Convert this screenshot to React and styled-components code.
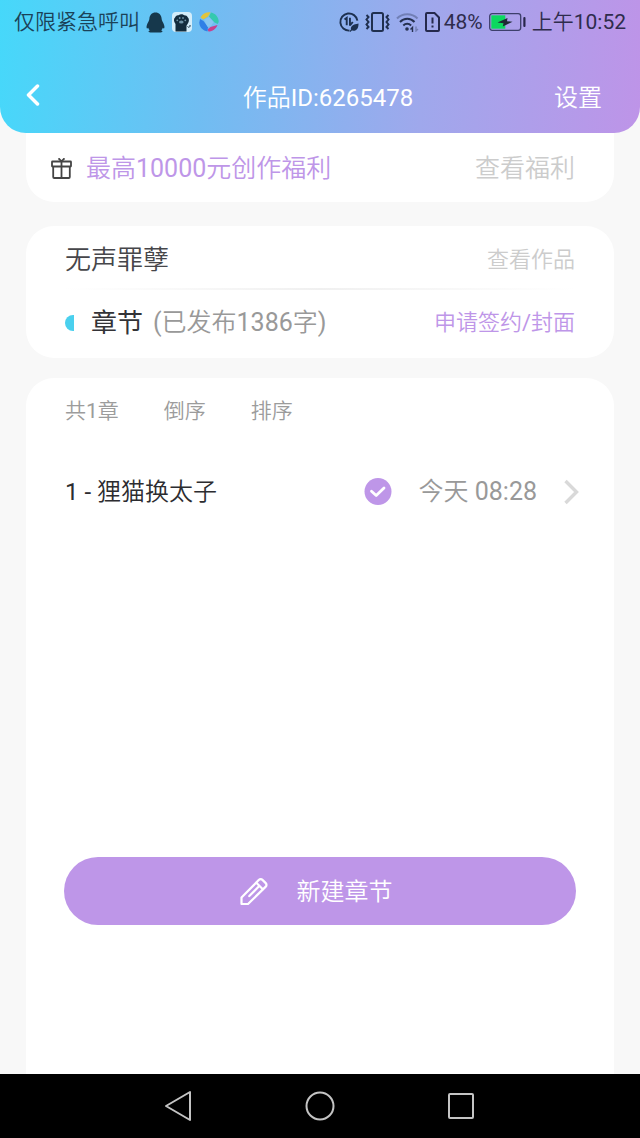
import { useState } from 'react';
import styled, { createGlobalStyle } from 'styled-components';

const GlobalStyle = createGlobalStyle`
  * {
    box-sizing: border-box;
  }
  body {
    margin: 0;
    background: #f8f8f8;
    font-family: Roboto, 'Noto Sans CJK SC DemiLight', 'Noto Sans CJK SC', sans-serif;
    font-weight: 400;
  }
  button {
    padding: 0;
    border: 0;
    background: none;
    font: inherit;
    color: inherit;
    cursor: pointer;
  }
  svg {
    display: block;
    flex: none;
  }
`;

const Screen = styled.div`
  min-height: 100vh;
  display: flex;
  flex-direction: column;
`;

const Header = styled.header`
  height: 133px;
  border-radius: 0 0 26px 26px;
  background: linear-gradient(94deg, #46d8fa 0%, #70bdf2 32%, #9fa8ec 66%, #be94e8 100%);
`;

const StatusBar = styled.div`
  height: 44px;
  padding: 0 14px;
  display: flex;
  align-items: center;
  justify-content: space-between;
  font-size: 21px;
  line-height: 28px;
  color: #1f3a52;
`;

const StatusGroup = styled.div`
  display: flex;
  align-items: center;
  gap: ${props => props.$gap};
  color: ${props => props.$color};
  white-space: nowrap;
`;

const TitleBar = styled.div`
  height: 89px;
  padding: 32px 38px 14px 26px;
  display: grid;
  grid-template-columns: 1fr auto 1fr;
  align-items: center;
  color: #fff;
  font-size: 24px;
  line-height: 32px;
`;

const Title = styled.h1`
  margin: 0 0 0 28px;
  font: inherit;
`;

const BackButton = styled.button`
  justify-self: start;
  padding-bottom: 6px;
`;

const SettingsButton = styled.button`
  justify-self: end;
`;

const Content = styled.main`
  flex: 1;
  display: flex;
  flex-direction: column;
  padding: 0 26px;
`;

const Card = styled.section`
  background: #fff;
  border-radius: 28px;
  padding: 0 39px;
`;

const BenefitCard = styled(Card)`
  height: 69px;
  margin-bottom: 24px;
  padding: 2px 39px 0 25px;
  border-radius: 0 0 28px 28px;
  display: flex;
  align-items: center;
  gap: 14px;
`;

const WorkCard = styled(Card)`
  margin-bottom: 20px;
  padding: 6px 39px 2px;
`;

const ChapterCard = styled(Card)`
  flex: 1;
  display: flex;
  flex-direction: column;
  border-radius: 28px 28px 0 0;
  padding-bottom: 149px;
`;

const Row = styled.div`
  display: flex;
  align-items: center;
  height: ${props => props.$height};
`;

const Divider = styled.hr`
  height: 2px;
  margin: 0;
  border: 0;
  background: linear-gradient(90deg, #fff, #f0f0f0 50%, #fff);
`;

const Text = styled.span`
  font-size: ${props => props.$size};
  line-height: 36px;
  color: ${props => props.$color};
  white-space: nowrap;
`;

const Link = styled.a`
  margin-left: auto;
  font-size: ${props => props.$size};
  line-height: 36px;
  color: ${props => props.$color};
  text-decoration: none;
  white-space: nowrap;
`;

const WorkTitle = styled.h2`
  margin: 0;
  font-size: 26px;
  font-weight: inherit;
  line-height: 36px;
  color: #46464a;
`;

const SectionTitle = styled(WorkTitle)`
  margin: 0 10px 0 17px;
  font-family: Roboto, 'Noto Sans CJK SC', sans-serif;
  color: #333337;
`;

const HalfDot = styled.span`
  width: 9px;
  height: 16px;
  border-radius: 9px 0 0 9px;
  background: #4ad0ee;
`;

const ListTools = styled(Row)`
  gap: 45px;
  font-size: 21px;
  line-height: 32px;
  color: #9c9c9c;
`;

const ChapterList = styled.ul`
  flex: 1;
  margin: 0;
  padding: 14px 0 0;
  list-style: none;
`;

const ChapterRow = styled.button`
  width: 100%;
  height: 68px;
  display: flex;
  align-items: center;
  text-align: left;
`;

const ChapterName = styled.span`
  flex: 1;
  font-size: 24px;
  line-height: 36px;
  color: #2c2c30;
`;

const ChapterMeta = styled.span`
  display: flex;
  align-items: center;
  gap: 27px;
  margin-right: -4px;
`;

const NewChapterButton = styled.button`
  height: 68px;
  margin: 0 -1px;
  padding: 2px 8px 0 0;
  border-radius: 34px;
  background: #be96e8;
  color: #fff;
  font-size: 24px;
  line-height: 36px;
  display: flex;
  align-items: center;
  justify-content: center;
  gap: 29px;
`;

const NavBar = styled.nav`
  height: 64px;
  background: #000;
  display: flex;
  justify-content: center;
`;

const NavButton = styled.button`
  flex: 0 0 22%;
  display: flex;
  align-items: center;
  justify-content: center;
`;

const QQIcon = () => (
  <svg width="19" height="21" viewBox="0 0 19 21" fill="#16384c">
    <path d="M9.500 .5C5.800 .5 3.600 3.200 3.400 6.600c0 1-.3 2-1 3.200C1.200 12 .3 14 .6 15.800c.2 1.100 1 .8 1.600 0 .3 1 .9 1.900 1.600 2.600-.9.300-1.400.6-1.200 1.300.2.500 1.200.7 3 .7h7.800c1.800 0 2.800-.2 3-.7.2-.7-.3-1-1.200-1.300.7-.7 1.300-1.600 1.600-2.600.6.800 1.400 1.100 1.600 0 .300-1.800-.6-3.800-1.800-6-.7-1.200-1-2.200-1-3.200C15.400 3.200 13.200.5 9.500.5z" />
  </svg>
);

const PawIcon = () => (
  <svg width="20" height="20" viewBox="0 0 20 20">
    <rect width="20" height="20" rx="4" fill="#d3edfa" />
    <path d="M3.500 19.500V12C1.500 9.500 1.500 6.500 3.200 5.200 4 3.200 6 3.400 6.600 3.300 8 1.800 11 1.800 12.200 3.300c2 0 3 .7 3.500 2 1.700 1.500 1.600 4.500 0 6.500l-1.200 2v5.700z" fill="#132c3d" />
    <path d="M15.500 14.500c1.200 1.500 3 .6 2.500-1.500" fill="none" stroke="#132c3d" />
    <g fill="#6f94a8">
      <ellipse cx="9.300" cy="10" rx="2.300" ry="1.500" />
      <circle cx="5.300" cy="8.300" r=".9" />
      <circle cx="7.700" cy="6" r=".9" />
      <circle cx="11" cy="6" r=".9" />
      <circle cx="13.300" cy="8.300" r=".9" />
    </g>
  </svg>
);

const SwirlIcon = () => (
  <svg width="20" height="20" viewBox="0 0 20 20">
    <path d="M1.500 5.500C3.500 1.500 7.500 0 11.500 .4L9 4.500 4.500 7.500z" fill="#e2c43c" />
    <path d="M12 .4c4.500.8 7.700 4.800 7.700 9.600l-1 2L15.500 10.500 10 4.500z" fill="#35c9ae" />
    <path d="M18.500 13c-1.500 4-5 6.500-9 6.500L8.500 17.500l3-2.500z" fill="#c9408d" />
    <path d="M8.500 19.400C4 18.800.3 15 .3 10.500L1 7 4.500 9 9 15z" fill="#2f7fe6" />
    <path d="M5 7.800L9.800 5l4.700 5-2.500 4.300-3.500.5z" fill="#86c6f2" />
  </svg>
);

const DataSaverIcon = () => (
  <svg width="20" height="20" viewBox="0 0 21 21" fill="none" stroke="#1d3150" strokeWidth="2">
    <path d="M19.300 9A9 9 0 1 0 11 19.500" />
    <path d="M5.800 8l2.300-1.800V14M11.500 6v8.500M11.500 14l3-3.500" />
    <path d="M12.500 18.500c-.5-4 2.500-5.500 8-6.500 0 5-2 8.500-7 7.500z" fill="#1d3150" stroke="none" />
    <path d="M11.500 20.500l3-3" strokeWidth="1.200" />
  </svg>
);

const VibrateIcon = () => (
  <svg width="25" height="20" viewBox="0 0 25 20" fill="none" stroke="#20304f" strokeWidth="2">
    <rect x="7" y="1" width="11" height="18" rx="1.500" />
    <path d="M1.500 3l2 2-2 2.500 2 2.500-2 2.500 2 2.500-2 2M23.500 3l-2 2 2 2.500-2 2.500 2 2.500-2 2.500 2 2" />
  </svg>
);

const WifiIcon = () => (
  <svg width="23" height="20" viewBox="0 0 23 20" fill="none" stroke="#25304f" strokeWidth="2">
    <path d="M1 6.500C6.500.800 16 .8 21.500 6.500" opacity=".35" />
    <path d="M4 10c4-4.300 10.500-4.300 14.500 0M7.300 13.500c2.300-2.300 5.500-2.300 7.800 0" />
    <circle cx="11" cy="17" r="1.800" fill="#25304f" stroke="none" />
    <path d="M14.500 17.500l2-2V20" strokeWidth="1.400" />
    <path d="M20 14.500V19l2-2" strokeWidth="1.400" opacity=".35" />
  </svg>
);

const SimIcon = () => (
  <svg width="15" height="20" viewBox="0 0 15 20" fill="none" stroke="#25294c" strokeWidth="2">
    <path d="M2 1h7.500L14 5.500V18a1 1 0 0 1-1 1H2a1 1 0 0 1-1-1V2a1 1 0 0 1 1-1z" />
    <path d="M7.500 5.500v6M7.500 13.500v2" />
  </svg>
);

const BatteryIcon = () => (
  <svg width="37" height="18" viewBox="0 0 37 18">
    <rect x=".7" y=".7" width="31" height="16.600" rx="2.500" fill="none" stroke="#3d3f6b" strokeWidth="1.300" />
    <rect x="2.300" y="2.300" width="14" height="13.400" fill="#0bd95f" />
    <path d="M8.500 9.500L18.500 5l-.5 3.200 5.500.6-9.700 4.700.7-3.300z" fill="#1e2a34" />
    <rect x="34.300" y="4" width="2.200" height="10" rx="1" fill="#28264a" />
  </svg>
);

const BackIcon = () => (
  <svg width="14" height="22" viewBox="0 0 14 22" fill="none" stroke="#fff" strokeWidth="3.500" strokeLinecap="round" strokeLinejoin="round">
    <path d="M11.500 2L2.500 11l9 9" />
  </svg>
);

const GiftIcon = () => (
  <svg width="21" height="22" viewBox="0 0 21 22" fill="none" stroke="#444" strokeWidth="1.800">
    <rect x="1" y="3.500" width="19" height="5" rx=".5" />
    <path d="M2.200 8.500V19a1 1 0 0 0 1 1h14.600a1 1 0 0 0 1-1V8.500M10.500 3.500V20M7.500 .3l3 3L13.500 .3" />
  </svg>
);

const CheckIcon = () => (
  <svg width="28" height="28" viewBox="0 0 28 28">
    <circle cx="14" cy="13.500" r="13.500" fill="#be96e8" />
    <path d="M7.500 13.300l4.700 4.200 7.800-7.500" fill="none" stroke="#fff" strokeWidth="2.800" strokeLinecap="round" strokeLinejoin="round" />
  </svg>
);

const ArrowIcon = () => (
  <svg width="15" height="26" viewBox="0 0 15 26" fill="none" stroke="#d9d9d9" strokeWidth="3.400">
    <path d="M1.500 2L12.500 13 1.500 24" />
  </svg>
);

const PencilIcon = () => (
  <svg width="28" height="28" viewBox="0 0 28 28" fill="none" stroke="#fff" strokeWidth="2.200" strokeLinejoin="round" strokeLinecap="round">
    <path d="M1.500 26v-6.500L18.700 2.100q2-2 4 0l2.800 2.800q2 2 0 4L8 26z" />
    <path d="M16.300 4.700l6.500 6.500M18.500 8.800L9.300 18.100" />
  </svg>
);

function StatusInfo() {
  return (
    <StatusBar>
      <StatusGroup $gap="7px" $color="#1b4258">
        <StatusGroup $gap="6px">
          仅限紧急呼叫
          <QQIcon />
        </StatusGroup>
        <PawIcon />
        <SwirlIcon />
      </StatusGroup>
      <StatusGroup $gap="6px" $color="#2e2c4c">
        <DataSaverIcon />
        <VibrateIcon />
        <WifiIcon />
        <StatusGroup $gap="4px">
          <SimIcon />
          48%
        </StatusGroup>
        <BatteryIcon />
        上午10:52
      </StatusGroup>
    </StatusBar>
  );
}

const chapters = [{ id: 1, name: '狸猫换太子', time: '今天 08:28' }];

function App() {
  const [reversed, setReversed] = useState(false);
  const list = reversed ? [...chapters].reverse() : chapters;

  return (
    <Screen>
      <GlobalStyle />
      <Header>
        <StatusInfo />
        <TitleBar>
          <BackButton aria-label="返回">
            <BackIcon />
          </BackButton>
          <Title>作品ID:6265478</Title>
          <SettingsButton>设置</SettingsButton>
        </TitleBar>
      </Header>

      <Content>
        <BenefitCard>
          <GiftIcon />
          <Text $size="25px" $color="#be96e8">最高10000元创作福利</Text>
          <Link href="#benefits" $size="25px" $color="#cccccc">查看福利</Link>
        </BenefitCard>

        <WorkCard>
          <Row $height="56px">
            <WorkTitle>无声罪孽</WorkTitle>
            <Link href="#work" $size="22px" $color="#cccccc">查看作品</Link>
          </Row>
          <Divider />
          <Row $height="66px">
            <HalfDot />
            <SectionTitle>章节</SectionTitle>
            <Text $size="25px" $color="#999999">(已发布1386字)</Text>
            <Link href="#sign" $size="22px" $color="#be96e8">申请签约/封面</Link>
          </Row>
        </WorkCard>

        <ChapterCard>
          <ListTools $height="66px">
            <span>共{chapters.length}章</span>
            <button onClick={() => setReversed(!reversed)}>倒序</button>
            <button>排序</button>
          </ListTools>
          <ChapterList>
            {list.map(chapter => (
              <li key={chapter.id}>
                <ChapterRow>
                  <ChapterName>{chapter.id} - {chapter.name}</ChapterName>
                  <ChapterMeta>
                    <CheckIcon />
                    <Text $size="25px" $color="#999999">{chapter.time}</Text>
                    <ArrowIcon />
                  </ChapterMeta>
                </ChapterRow>
              </li>
            ))}
          </ChapterList>
          <NewChapterButton>
            <PencilIcon />
            新建章节
          </NewChapterButton>
        </ChapterCard>
      </Content>

      <NavBar>
        <NavButton aria-label="后退">
          <svg width="30" height="32" viewBox="0 0 30 32" fill="none" stroke="#c4c4c4" strokeWidth="2" strokeLinejoin="round">
            <path d="M26 2v28L2 16z" />
          </svg>
        </NavButton>
        <NavButton aria-label="主屏幕">
          <svg width="32" height="32" viewBox="0 0 32 32" fill="none" stroke="#c4c4c4" strokeWidth="2">
            <circle cx="16" cy="16" r="13.500" />
          </svg>
        </NavButton>
        <NavButton aria-label="最近任务">
          <svg width="28" height="28" viewBox="0 0 28 28" fill="none" stroke="#c4c4c4" strokeWidth="2">
            <rect x="2" y="2" width="24" height="24" rx="1" />
          </svg>
        </NavButton>
      </NavBar>
    </Screen>
  );
}

export default App;
